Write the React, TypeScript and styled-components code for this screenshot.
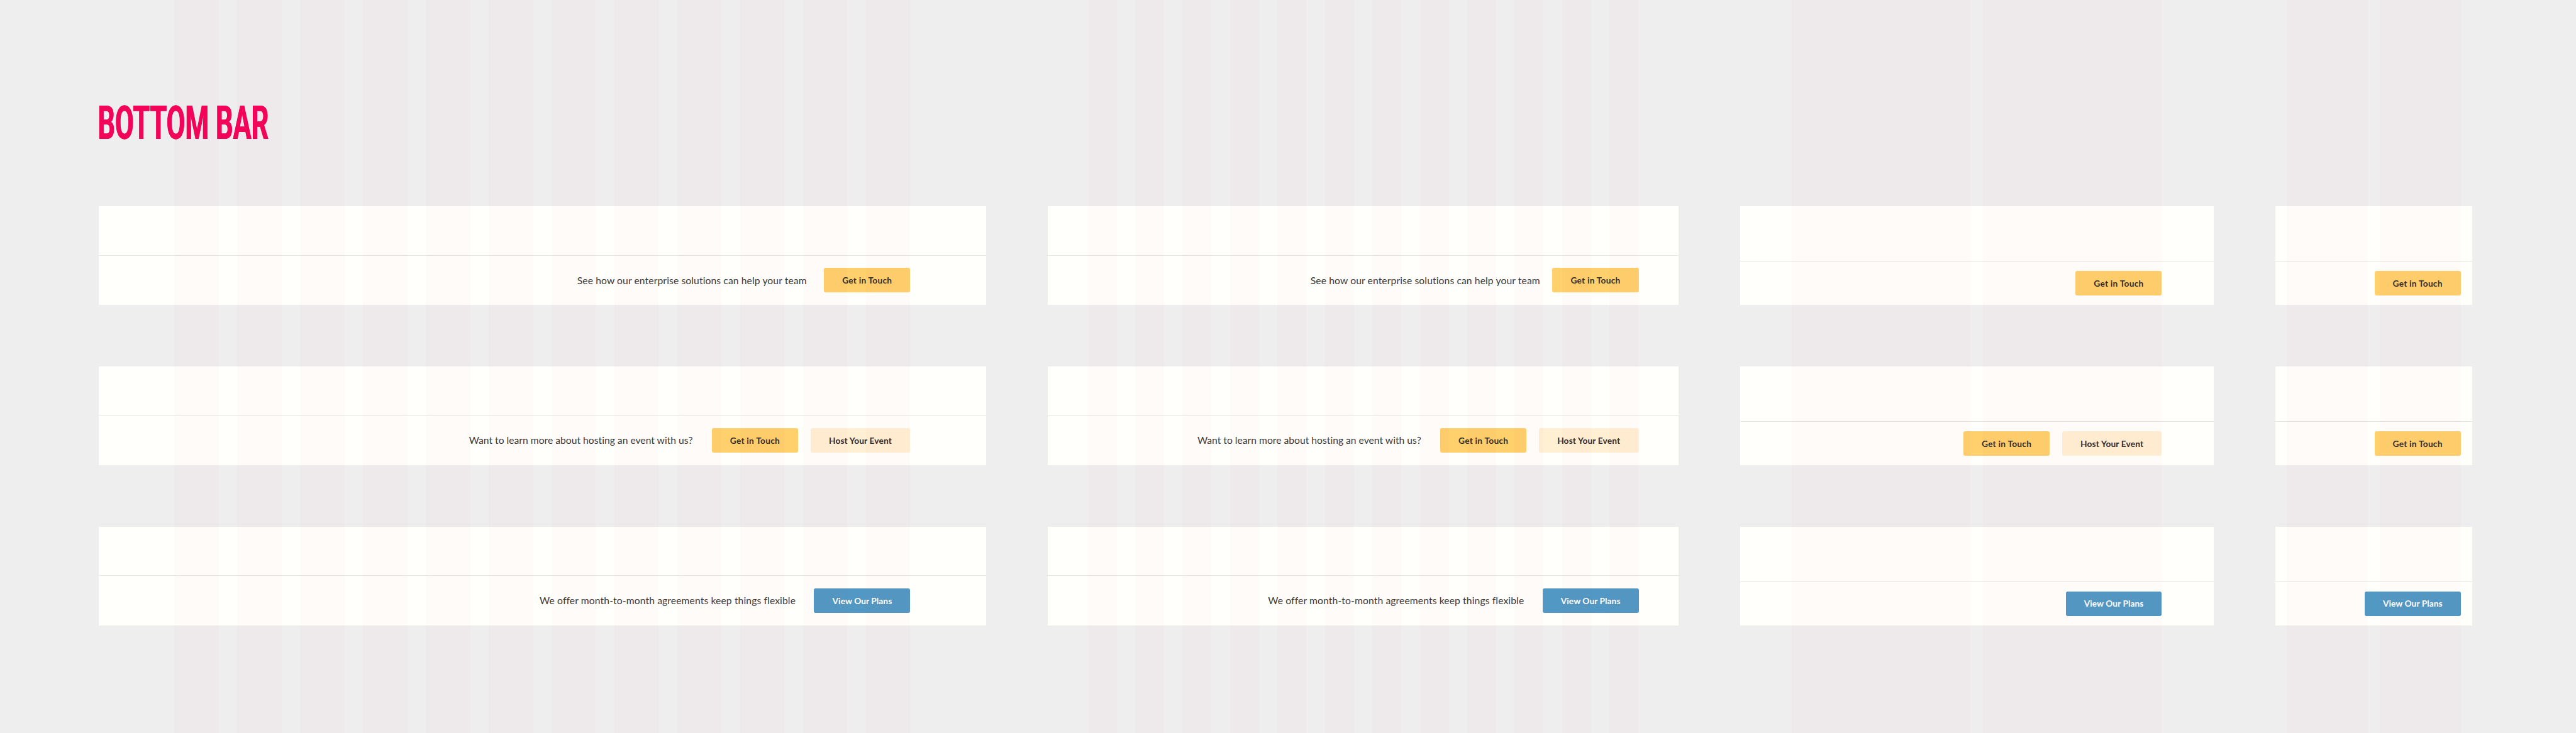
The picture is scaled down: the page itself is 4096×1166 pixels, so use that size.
import React from 'react';
import styled, { createGlobalStyle } from 'styled-components';

// The board is designed on a 4180px wide artboard and drawn at this scale.
const SCALE = 4096 / 4180;
const u = (n: number) => `${+(n * SCALE).toFixed(3)}px`;

type Size = 'desktop' | 'laptop' | 'tablet' | 'mobile';
type Tone = 'primary' | 'secondary' | 'blue';

const panels: Record<Size, { width: number; bar: number; inset: number }> = {
  desktop: { width: 1440, bar: 80, inset: 123 },
  laptop: { width: 1024, bar: 80, inset: 65 },
  tablet: { width: 768, bar: 70, inset: 84 },
  mobile: { width: 320, bar: 70, inset: 19 },
};

const guides: Record<Size, { count: number; column: number; gutter: number; left: number }> = {
  desktop: { count: 12, column: 72, gutter: 30, left: 123 },
  laptop: { count: 12, column: 47, gutter: 30, left: 65 },
  tablet: { count: 2, column: 290.7, gutter: 19.6, left: 83 },
  mobile: { count: 2, column: 131, gutter: 20, left: 19 },
};

const tones: Record<Tone, { background: string; color: string }> = {
  primary: { background: '#ffd06c', color: '#303030' },
  secondary: { background: '#ffefd3', color: '#303030' },
  blue: { background: '#5199c4', color: '#ffffff' },
};

const sizes: Size[] = ['desktop', 'laptop', 'tablet', 'mobile'];
const tracks = sizes.map((s) => u(panels[s].width)).join(' ');

const GlobalStyle = createGlobalStyle`
  body {
    margin: 0;
    background: #eeeeee;
    overflow: hidden;
  }
  *, *::before, *::after { box-sizing: border-box; }
`;

const Board = styled.main`
  position: relative;
  width: 4096px;
  height: 1166px;
  overflow: hidden;
  padding: ${u(156.5)} 0 0 ${u(160)};
  font-family: Lato, 'Open Sans', sans-serif;
`;

const Title = styled.h1`
  margin: 0;
  width: max-content;
  height: ${u(178.5)};
  font-family: Roboto, 'Liberation Sans', sans-serif;
  font-size: ${u(75)};
  line-height: ${u(88)};
  font-weight: 700;
  color: #f20559;
  text-shadow: 0.7px 0 #f20559, 1.4px 0 #f20559;
  transform: scaleX(0.588);
  transform-origin: left top;
  margin-left: ${u(-2)};
  white-space: nowrap;
`;

const Gallery = styled.section`
  display: grid;
  grid-template-columns: ${tracks};
  grid-auto-rows: ${u(160)};
  gap: ${u(100)};
`;

const Panel = styled.article`
  display: flex;
  flex-direction: column;
  justify-content: flex-end;
  background: #fffffc;
`;

const Bar = styled.div<{ $size: Size }>`
  display: flex;
  align-items: center;
  justify-content: flex-end;
  box-sizing: content-box;
  height: ${(p) => u(panels[p.$size].bar)};
  padding-right: ${(p) => u(panels[p.$size].inset)};
  border-top: 1px solid #e6e6e6;
`;

const Message = styled.p<{ $gap: number; $tracking: number }>`
  margin: 0 ${(p) => u(p.$gap)} 0 0;
  padding-top: 1px;
  font-size: ${u(16)};
  line-height: ${u(24)};
  letter-spacing: ${(p) => u(p.$tracking)};
  font-variant-ligatures: none;
  color: #3a3a3a;
  white-space: nowrap;
`;

const Actions = styled.div`
  display: flex;
  gap: ${u(20)};
`;

const Button = styled.button<{ $tone: Tone; $width: number; $tracking: number }>`
  display: flex;
  align-items: center;
  justify-content: center;
  width: ${(p) => u(p.$width)};
  height: ${u(40)};
  padding: 0;
  border: 0;
  border-radius: ${u(3)};
  background: ${(p) => tones[p.$tone].background};
  color: ${(p) => tones[p.$tone].color};
  font: 700 ${u(14)} / ${u(20)} Lato, 'Open Sans', sans-serif;
  letter-spacing: ${(p) => u(p.$tracking)};
  white-space: nowrap;
`;

const GuideLayer = styled.div`
  position: absolute;
  inset: 0;
  display: grid;
  grid-template-columns: ${tracks};
  column-gap: ${u(100)};
  padding-left: ${u(160)};
  pointer-events: none;
`;

const GuideSet = styled.div<{ $size: Size }>`
  display: grid;
  grid-template-columns: repeat(${(p) => guides[p.$size].count}, ${(p) => u(guides[p.$size].column)});
  column-gap: ${(p) => u(guides[p.$size].gutter)};
  padding-left: ${(p) => u(guides[p.$size].left)};
`;

const Guide = styled.span`
  background: rgba(240, 0, 80, 0.016);
`;

interface Action {
  label: string;
  tone: Tone;
  width: number;
  tracking: number;
}

interface Variant {
  message: string;
  tracking: number;
  gap: { desktop: number; laptop: number };
  actions: Action[];
}

const touch: Action = { label: 'Get in Touch', tone: 'primary', width: 140, tracking: 0.25 };
const host: Action = { label: 'Host Your Event', tone: 'secondary', width: 162, tracking: 0.15 };
const plans: Action = { label: 'View Our Plans', tone: 'blue', width: 156, tracking: 0.08 };

const variants: Variant[] = [
  {
    message: 'See how our enterprise solutions can help your team',
    tracking: 0.11,
    gap: { desktop: 28, laptop: 20 },
    actions: [touch],
  },
  {
    message: 'Want to learn more about hosting an event with us?',
    tracking: 0.01,
    gap: { desktop: 31, laptop: 31 },
    actions: [touch, host],
  },
  {
    message: 'We offer month-to-month agreements keep things flexible',
    tracking: 0.12,
    gap: { desktop: 30, laptop: 30 },
    actions: [plans],
  },
];

function BottomBar({ variant, size }: { variant: Variant; size: Size }) {
  const actions = size === 'mobile' ? variant.actions.slice(0, 1) : variant.actions;
  return (
    <Panel>
      <Bar $size={size}>
        {(size === 'desktop' || size === 'laptop') && (
          <Message $gap={variant.gap[size]} $tracking={variant.tracking}>
            {variant.message}
          </Message>
        )}
        <Actions>
          {actions.map((a) => (
            <Button key={a.label} $tone={a.tone} $width={a.width} $tracking={a.tracking}>
              {a.label}
            </Button>
          ))}
        </Actions>
      </Bar>
    </Panel>
  );
}

export default function App() {
  return (
    <>
      <GlobalStyle />
      <Board>
        <Title>BOTTOM BAR</Title>
        <Gallery>
          {variants.map((v) => sizes.map((s) => <BottomBar key={v.message + s} variant={v} size={s} />))}
        </Gallery>
        <GuideLayer>
          {sizes.map((s) => (
            <GuideSet key={s} $size={s}>
              {Array.from({ length: guides[s].count }, (_, i) => (
                <Guide key={i} />
              ))}
            </GuideSet>
          ))}
        </GuideLayer>
      </Board>
    </>
  );
}
